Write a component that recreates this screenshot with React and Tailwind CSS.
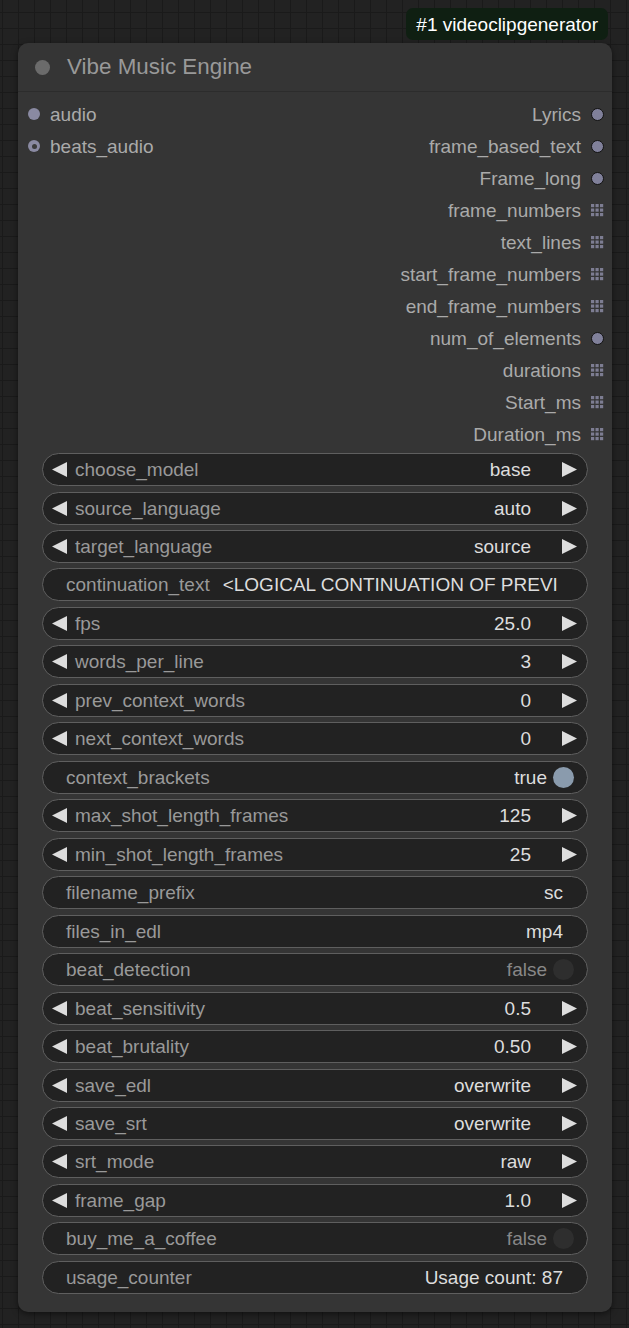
import React from "react";

const FONT = { fontFamily: '"Liberation Sans", Arial, sans-serif' };

const outputs = [
  ["Lyrics", "dot"],
  ["frame_based_text", "dot"],
  ["Frame_long", "dot"],
  ["frame_numbers", "grid"],
  ["text_lines", "grid"],
  ["start_frame_numbers", "grid"],
  ["end_frame_numbers", "grid"],
  ["num_of_elements", "dot"],
  ["durations", "grid"],
  ["Start_ms", "grid"],
  ["Duration_ms", "grid"],
];

const widgets = [
  { t: "num", l: "choose_model", v: "base" },
  { t: "num", l: "source_language", v: "auto" },
  { t: "num", l: "target_language", v: "source" },
  { t: "text", l: "continuation_text", v: "<LOGICAL CONTINUATION OF PREVI", long: true },
  { t: "num", l: "fps", v: "25.0" },
  { t: "num", l: "words_per_line", v: "3" },
  { t: "num", l: "prev_context_words", v: "0" },
  { t: "num", l: "next_context_words", v: "0" },
  { t: "toggle", l: "context_brackets", v: true },
  { t: "num", l: "max_shot_length_frames", v: "125" },
  { t: "num", l: "min_shot_length_frames", v: "25" },
  { t: "text", l: "filename_prefix", v: "sc" },
  { t: "text", l: "files_in_edl", v: "mp4" },
  { t: "toggle", l: "beat_detection", v: false },
  { t: "num", l: "beat_sensitivity", v: "0.5" },
  { t: "num", l: "beat_brutality", v: "0.50" },
  { t: "num", l: "save_edl", v: "overwrite" },
  { t: "num", l: "save_srt", v: "overwrite" },
  { t: "num", l: "srt_mode", v: "raw" },
  { t: "num", l: "frame_gap", v: "1.0" },
  { t: "toggle", l: "buy_me_a_coffee", v: false },
  { t: "text", l: "usage_counter", v: "Usage count: 87" },
];

function GridIcon() {
  const cells = [];
  for (let r = 0; r < 3; r++)
    for (let c = 0; c < 3; c++)
      cells.push(<rect key={r * 3 + c} x={c * 4.5} y={r * 4.5} width="3.2" height="3.2" fill="#7d7d92" />);
  return (
    <svg width="13" height="13" viewBox="0 0 13 13" className="block">
      {cells}
    </svg>
  );
}

function OutDot() {
  return <div className="w-[13px] h-[13px] rounded-full bg-[#80809a] border-[1.5px] border-[#111]" />;
}

function Widget({ w }) {
  const base =
    "h-[33px] rounded-full bg-[#222222] border border-[#5f5f5f] flex items-center text-[19px] leading-none whitespace-nowrap overflow-hidden";
  if (w.t === "num") {
    return (
      <div className={base + " pl-[9px] pr-[10px]"}>
        <svg width="15" height="15" viewBox="0 0 15 15" className="shrink-0">
          <polygon points="15,0 0,7.5 15,15" fill="#dddddd" />
        </svg>
        <span className="ml-[8px] text-[#999999]">{w.l}</span>
        <span className="ml-auto text-[#dddddd]">{w.v}</span>
        <svg width="15" height="15" viewBox="0 0 15 15" className="shrink-0 ml-[31px]">
          <polygon points="0,0 15,7.5 0,15" fill="#dddddd" />
        </svg>
      </div>
    );
  }
  if (w.t === "toggle") {
    return (
      <div className={base + " pl-[23px] pr-[13px]"}>
        <span className="text-[#999999]">{w.l}</span>
        <span className={"ml-auto " + (w.v ? "text-[#dddddd]" : "text-[#888888]")}>{w.v ? "true" : "false"}</span>
        <div
          className={
            "ml-[6px] w-[21px] h-[21px] rounded-full shrink-0 " + (w.v ? "bg-[#8a9bad]" : "bg-[#2e2e2e]")
          }
        />
      </div>
    );
  }
  return (
    <div className={base + " pl-[23px] pr-[24px]"}>
      <span className="text-[#999999] shrink-0">{w.l}</span>
      <span className={"text-[#dddddd] " + (w.long ? "ml-[13px] overflow-hidden" : "ml-auto")}>{w.v}</span>
    </div>
  );
}

export default function App() {
  return (
    <div
      style={FONT}
      className="w-[629px] h-[1328px] overflow-hidden bg-[#222222] bg-[linear-gradient(to_right,#1a1a1a_1px,transparent_1px),linear-gradient(to_bottom,#1a1a1a_1px,transparent_1px)] bg-[size:16px_16px] bg-[position:2px_12px] pt-[8px]"
    >
      <div className="flex justify-end pr-[21px]">
        <div className="h-[32px] px-[10px] rounded-[7px] bg-[#0f1f12] text-white text-[19px] flex items-center leading-none">
          #1 videoclipgenerator
        </div>
      </div>
      <div className="mt-[3px] ml-[18px] w-[594px] rounded-[10px] bg-[#353535] shadow-[0_2px_6px_rgba(0,0,0,0.5)] pb-[18px]">
        <div className="h-[49px] flex items-center border-b border-[#2c2c2c] pl-[17px]">
          <div className="w-[15px] h-[15px] rounded-full bg-[#6b6b6b]" />
          <span className="ml-[17px] text-[22.4px] text-[#999999] leading-none">Vibe Music Engine</span>
        </div>
        <div className="pt-[6px] flex justify-between text-[19px] text-[#aaaaaa] leading-none">
          <div className="flex flex-col pl-[10px]">
            <div className="h-[32.1px] flex items-center">
              <div className="w-[12px] h-[12px] rounded-full bg-[#8a8aa2]" />
              <span className="ml-[10px]">audio</span>
            </div>
            <div className="h-[32.1px] flex items-center">
              <div className="w-[12px] h-[12px] rounded-full bg-[#8a8aa2] flex items-center justify-center">
                <div className="w-[5px] h-[5px] rounded-full bg-[#3a3a3a]" />
              </div>
              <span className="ml-[10px]">beats_audio</span>
            </div>
          </div>
          <div className="flex flex-col items-end pr-[8px]">
            {outputs.map(([name, kind]) => (
              <div key={name} className="h-[32.1px] flex items-center">
                <span>{name}</span>
                <div className="ml-[10px] w-[13px] flex justify-center">
                  {kind === "dot" ? <OutDot /> : <GridIcon />}
                </div>
              </div>
            ))}
          </div>
        </div>
        <div className="mt-[2px] px-[24px] flex flex-col gap-[5.48px]">
          {widgets.map((w) => (
            <Widget key={w.l} w={w} />
          ))}
        </div>
      </div>
    </div>
  );
}
